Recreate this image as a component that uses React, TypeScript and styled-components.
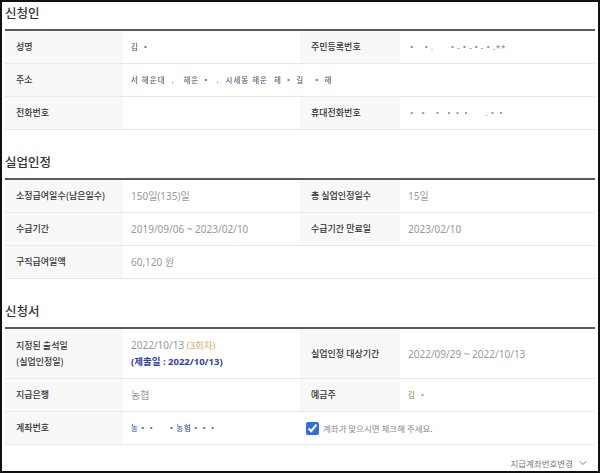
import React from "react";
import styled, { createGlobalStyle } from "styled-components";
import { ChevronDown } from "lucide-react";

const GlobalStyle = createGlobalStyle`
  body {
    margin: 0;
    background: #fff;
  }
`;

const Frame = styled.div`
  width: 600px;
  height: 473px;
  box-sizing: border-box;
  border: 2px solid #111;
  padding: 0 3px;
  background: #fff;
  font-family: "Noto Sans", "Noto Sans CJK KR", sans-serif;
  overflow: hidden;
`;

const Section = styled.section<{ $first?: boolean }>`
  margin-top: ${props => (props.$first ? 0 : 21)}px;
`;

const SectionTitle = styled.h2`
  margin: 0;
  padding: 1px 0 6px;
  line-height: 20px;
  font-family: "Noto Sans CJK KR", sans-serif;
  font-size: 12.5px;
  font-weight: 500;
  color: #333;
  border-bottom: 2px solid #5a5a5a;
`;

const Grid = styled.div`
  display: grid;
  grid-template-columns: 118px 177px 100px 1fr;
`;

const Label = styled.div`
  display: flex;
  flex-direction: column;
  justify-content: center;
  padding: 8px 11px;
  background: #f8f8f8;
  border-bottom: 1px solid #e8e8e8;
  font-family: "Noto Sans CJK KR", sans-serif;
  font-size: 9px;
  font-weight: 500;
  line-height: 16px;
  color: #333;
`;

const Value = styled.div<{ $span?: number }>`
  grid-column: span ${props => props.$span ?? 1};
  display: flex;
  flex-direction: column;
  justify-content: center;
  align-items: flex-start;
  padding: 8px 8px;
  border-bottom: 1px solid #e8e8e8;
  font-size: 10px;
  line-height: 16px;
  color: #999;
  white-space: nowrap;
`;

const Orange = styled.span`
  color: #eda35c;
  font-size: 9.5px;
`;

const Blue = styled.span`
  color: #3340a8;
  font-weight: 700;
  font-size: 9.5px;
`;

const Masked = styled.span<{ $tone?: string }>`
  display: inline-block;
  color: ${props => props.$tone ?? "#9aa0b0"};
  font-size: 7.5px;
  font-weight: 700;
  letter-spacing: 1px;
  white-space: pre;
  filter: blur(0.45px);
`;

const CheckCell = styled.label`
  grid-column: span 2;
  display: flex;
  align-items: center;
  gap: 4px;
  padding: 8px 6px;
  border-bottom: 1px solid #e8e8e8;
  font-family: "Noto Sans CJK KR", sans-serif;
  font-size: 8.5px;
  line-height: 16px;
  color: #888;
`;

const CheckBox = styled.input`
  width: 13px;
  height: 13px;
  margin: 0;
  accent-color: #2f6ee0;
`;

const Footer = styled.div`
  display: flex;
  justify-content: flex-end;
  align-items: center;
  gap: 4px;
  padding: 10px 6px 0 0;
  font-family: "Noto Sans CJK KR", sans-serif;
  font-size: 8.5px;
  line-height: 16px;
  color: #777;
`;

const App = () => {
  return (
    <Frame>
      <GlobalStyle />

      <Section $first>
        <SectionTitle>신청인</SectionTitle>
        <Grid>
          <Label>성명</Label>
          <Value><Masked $tone="#6f7ea8">김 ▪</Masked></Value>
          <Label>주민등록번호</Label>
          <Value><Masked $tone="#8c92a8">▪  ▪.     ▪-▪-▪-▪.**</Masked></Value>

          <Label>주소</Label>
          <Value $span={3}>
            <Masked $tone="#7c8298">서 해운대  .   해운 ▪  .  시세동 해운  해 ▪ 길   ▪ 해</Masked>
          </Value>

          <Label>전화번호</Label>
          <Value />
          <Label>휴대전화번호</Label>
          <Value><Masked $tone="#b89a78">▪ ▪  ▪ ▪▪▪     .▪▪</Masked></Value>
        </Grid>
      </Section>

      <Section>
        <SectionTitle>실업인정</SectionTitle>
        <Grid>
          <Label>소정급여일수(남은일수)</Label>
          <Value>150일(135)일</Value>
          <Label>총 실업인정일수</Label>
          <Value>15일</Value>

          <Label>수급기간</Label>
          <Value>2019/09/06 ~ 2023/02/10</Value>
          <Label>수급기간 만료일</Label>
          <Value>2023/02/10</Value>

          <Label>구직급여일액</Label>
          <Value $span={3}>60,120 원</Value>
        </Grid>
      </Section>

      <Section>
        <SectionTitle>신청서</SectionTitle>
        <Grid>
          <Label>
            <span>지정된 출석일</span>
            <span>(실업인정일)</span>
          </Label>
          <Value>
            <span>2022/10/13 <Orange>(3회차)</Orange></span>
            <Blue>(제출일 : 2022/10/13)</Blue>
          </Value>
          <Label>실업인정 대상기간</Label>
          <Value>2022/09/29 ~ 2022/10/13</Value>

          <Label>지급은행</Label>
          <Value>농협</Value>
          <Label>예금주</Label>
          <Value><Masked $tone="#b0a880">김 ▪</Masked></Value>

          <Label>계좌번호</Label>
          <Value><Masked $tone="#5f7cc0">농▪▪    ▪농협▪▪▪</Masked></Value>
          <CheckCell>
            <CheckBox type="checkbox" defaultChecked />
            계좌가 맞으시면 체크해 주세요.
          </CheckCell>
        </Grid>
        <Footer>
          지급계좌번호변경
          <ChevronDown size={12} color="#6b7fa6" strokeWidth={2} />
        </Footer>
      </Section>
    </Frame>
  );
};

export default App;
